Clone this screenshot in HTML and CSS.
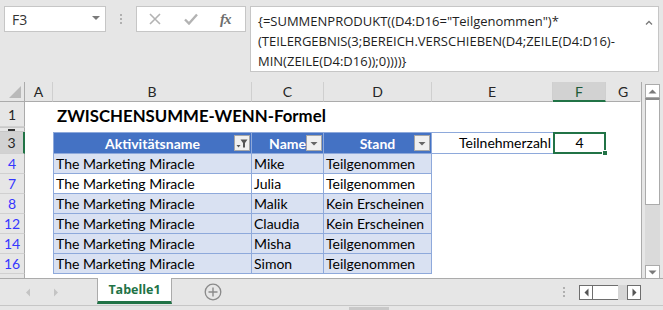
FILE: index.html
```html
<!DOCTYPE html>
<html lang="de">
<head>
    <meta charset="UTF-8">
    <title>ZWISCHENSUMME-WENN-Formel</title>
    <link rel="stylesheet" href="styles.css">
</head>
<body>
    <!-- Formelleiste -->
    <div class="topbar">
        <div class="namebox"><span>F3</span><span class="caret"></span></div>
        <div class="grip"><i></i><i></i><i></i></div>
        <div class="fxbtns">
            <svg class="ico-x" width="12" height="12" viewBox="0 0 12 12"><path d="M1 1L11 11M11 1L1 11" stroke="#b3b3b3" stroke-width="1.6" fill="none"/></svg>
            <svg class="ico-ok" width="14" height="12" viewBox="0 0 14 12"><path d="M1 6.5L5 10.5L13 1.5" stroke="#b3b3b3" stroke-width="2.4" fill="none"/></svg>
            <span class="fx"><i>f</i><i>x</i></span>
        </div>
        <div class="formula">
            <div class="formula-text">
                <div>{=SUMMENPRODUKT((D4:D16="Teilgenommen")*</div>
                <div>(TEILERGEBNIS(3;BEREICH.VERSCHIEBEN(D4;ZEILE(D4:D16)-</div>
                <div>MIN(ZEILE(D4:D16));0))))}</div>
            </div>
            <svg class="collapse" width="8" height="5" viewBox="0 0 8 5"><path d="M1 4.5L4 1.5L7 4.5" stroke="#7a7a7a" stroke-width="1.3" fill="none"/></svg>
        </div>
    </div>

    <!-- Tabelle -->
    <div class="main">
        <div class="sheet">
            <div class="row r-head">
                <div class="rh corner"><svg width="12" height="12" viewBox="0 0 12 12"><path d="M12 0V12H0Z" fill="#b9b9b9"/></svg></div>
                <div class="ch w-a">A</div>
                <div class="ch w-b">B</div>
                <div class="ch w-c">C</div>
                <div class="ch w-d">D</div>
                <div class="ch w-e">E</div>
                <div class="ch w-f ch-sel">F</div>
                <div class="ch w-g">G</div>
            </div>
            <div class="row r-title">
                <div class="rh">1</div>
                <div class="w-a"></div>
                <div class="title">ZWISCHENSUMME-WENN-Formel</div>
            </div>
            <div class="row r-hidden">
                <div class="rh"></div>
            </div>
            <div class="row r-th">
                <div class="rh rh-sel">3</div>
                <div class="w-a"></div>
                <div class="th w-b first">
                    <span>Aktivitätsname</span>
                    <span class="fbtn">
                        <svg width="14" height="14" viewBox="0 0 14 14"><path d="M1.5 9H5.5L3.5 11.5Z" fill="#555"/><path d="M5.5 3.5H12.5L10 7V11.5H8V7Z" fill="#555"/></svg>
                    </span>
                </div>
                <div class="th w-c">
                    <span>Name</span>
                    <span class="fbtn"><svg width="14" height="14" viewBox="0 0 14 14"><path d="M3.5 6H10.5L7 9.5Z" fill="#666"/></svg></span>
                </div>
                <div class="th w-d">
                    <span>Stand</span>
                    <span class="fbtn"><svg width="14" height="14" viewBox="0 0 14 14"><path d="M3.5 6H10.5L7 9.5Z" fill="#666"/></svg></span>
                </div>
                <div class="w-e label">Teilnehmerzahl</div>
                <div class="w-f active">4<span class="handle"></span></div>
            </div>
            <div class="row">
                <div class="rh rh-filt">4</div><div class="w-a"></div>
                <div class="td w-b first band">The Marketing Miracle</div>
                <div class="td w-c band">Mike</div>
                <div class="td w-d band">Teilgenommen</div>
            </div>
            <div class="row">
                <div class="rh rh-filt">7</div><div class="w-a"></div>
                <div class="td w-b first">The Marketing Miracle</div>
                <div class="td w-c">Julia</div>
                <div class="td w-d">Teilgenommen</div>
            </div>
            <div class="row">
                <div class="rh rh-filt">8</div><div class="w-a"></div>
                <div class="td w-b first band">The Marketing Miracle</div>
                <div class="td w-c band">Malik</div>
                <div class="td w-d band">Kein Erscheinen</div>
            </div>
            <div class="row">
                <div class="rh rh-filt">12</div><div class="w-a"></div>
                <div class="td w-b first band">The Marketing Miracle</div>
                <div class="td w-c band">Claudia</div>
                <div class="td w-d band">Kein Erscheinen</div>
            </div>
            <div class="row">
                <div class="rh rh-filt">14</div><div class="w-a"></div>
                <div class="td w-b first band">The Marketing Miracle</div>
                <div class="td w-c band">Misha</div>
                <div class="td w-d band">Teilgenommen</div>
            </div>
            <div class="row">
                <div class="rh rh-filt">16</div><div class="w-a"></div>
                <div class="td w-b first band">The Marketing Miracle</div>
                <div class="td w-c band">Simon</div>
                <div class="td w-d band">Teilgenommen</div>
            </div>
            <div class="row r-rest">
                <div class="rh"></div>
            </div>
        </div>

        <div class="vscroll">
            <div class="sbtn"><svg width="9" height="5" viewBox="0 0 9 5"><path d="M0.5 4.5H8.5L4.5 0.5Z" fill="#7a7a7a"/></svg></div>
            <div class="sthumb"></div>
            <div class="strack"></div>
            <div class="sbtn"><svg width="9" height="5" viewBox="0 0 9 5"><path d="M0.5 0.5H8.5L4.5 4.5Z" fill="#7a7a7a"/></svg></div>
        </div>
    </div>

    <!-- Blattregister -->
    <div class="tabbar">
        <svg class="nav" width="6" height="9" viewBox="0 0 6 9"><path d="M5 0.5V8.5L1 4.5Z" fill="#c4c4c4"/></svg>
        <svg class="nav nav-r" width="6" height="9" viewBox="0 0 6 9"><path d="M1 0.5V8.5L5 4.5Z" fill="#c4c4c4"/></svg>
        <div class="tab">Tabelle1</div>
        <svg class="addsheet" width="18" height="18" viewBox="0 0 18 18"><circle cx="9" cy="9" r="7.8" stroke="#8a8a8a" stroke-width="1.3" fill="none"/><path d="M9 4.5V13.5M4.5 9H13.5" stroke="#8a8a8a" stroke-width="1.4"/></svg>
        <div class="spacer"></div>
        <div class="grip grip-sm"><i></i><i></i><i></i></div>
        <div class="hscroll">
            <div class="hbtn"><svg width="5" height="9" viewBox="0 0 5 9"><path d="M4.5 0.5V8.5L0.5 4.5Z" fill="#555"/></svg></div>
            <div class="hthumb"></div>
            <div class="htrack"></div>
            <div class="hbtn"><svg width="5" height="9" viewBox="0 0 5 9"><path d="M0.5 0.5V8.5L4.5 4.5Z" fill="#555"/></svg></div>
        </div>
    </div>
    <div class="statusbar"><div class="sbar-thumb"></div></div>
</body>
</html>
```

FILE: styles.css
```css
* {
    box-sizing: border-box;
}
body {
    margin: 0;
    width: 663px;
    height: 310px;
    overflow: hidden;
    background-color: #e6e6e6;
    font-family: Lato, "Open Sans", sans-serif;
    color: #000;
}

/* Formelleiste */
.topbar {
    display: flex;
    align-items: flex-start;
    height: 82px;
    padding: 6px 0 0 4px;
}
.namebox {
    width: 102px;
    height: 26px;
    background-color: #fff;
    border: 1px solid #c6c6c6;
    display: flex;
    align-items: center;
    justify-content: space-between;
    padding: 0 5px 0 7px;
    font-family: "Open Sans", sans-serif;
    font-size: 14px;
    color: #333;
}
.caret {
    border-left: 4px solid transparent;
    border-right: 4px solid transparent;
    border-top: 4px solid #7a7a7a;
    margin-top: -3px;
}
.grip {
    display: flex;
    flex-direction: column;
    gap: 2px;
    margin: 8px 14px 0 14px;
}
.grip i {
    display: block;
    width: 2px;
    height: 2px;
    background-color: #b0b0b0;
}
.fxbtns {
    width: 110px;
    height: 26px;
    background-color: #fff;
    border: 1px solid #c6c6c6;
    display: flex;
    align-items: center;
    padding-left: 12px;
}
.ico-ok {
    margin-left: 23px;
}
.fx {
    margin-left: 22px;
    font-family: "Liberation Serif", serif;
    font-size: 15px;
    font-weight: bold;
    color: #6e6e6e;
    letter-spacing: -1px;
}
.formula {
    width: 409px;
    height: 66px;
    margin-left: 4px;
    background-color: #fff;
    border: 1px solid #c6c6c6;
    display: flex;
    justify-content: space-between;
    padding: 4px 5px 0 7px;
    font-family: "Open Sans", sans-serif;
    font-size: 13px;
    line-height: 20px;
    color: #1e1e1e;
}
.collapse {
    margin-top: 9px;
}

/* Tabellenblatt */
.main {
    display: flex;
    height: 196px;
}
.sheet {
    width: 642px;
    background-color: #fff;
    border-right: 1px solid #ababab;
}
.row {
    display: flex;
    height: 20px;
    font-size: 14px;
}
.r-head {
    background-color: #e6e6e6;
}
.r-title {
    height: 25px;
}
.r-hidden {
    height: 5px;
}
.r-th {
    height: 22px;
}
.r-rest {
    height: 4px;
}
.rh {
    width: 25px;
    flex: none;
    background-color: #e6e6e6;
    border-right: 1px solid #ababab;
    border-bottom: 1px solid #d0d0d0;
    display: flex;
    align-items: center;
    justify-content: center;
    font-size: 14px;
    color: #262626;
}
.corner {
    justify-content: flex-end;
    align-items: flex-end;
    padding: 0 3px 3px 0;
    border-bottom: 1px solid #ababab;
}
.r-hidden .rh {
    border-top: 1px solid #c8c8c8;
    border-bottom: 1px solid #c8c8c8;
    justify-content: flex-start;
    padding-left: 8px;
}
.r-hidden .rh::before {
    content: "";
    width: 7px;
    height: 2px;
    background-color: #333;
}
.r-rest .rh {
    border-bottom: none;
}
.rh-sel {
    background-color: #d2d2d2;
    border-right: 2px solid #217346;
}
.rh-filt {
    color: #3636ff;
}
.ch {
    flex: none;
    border-right: 1px solid #cfcfcf;
    border-bottom: 1px solid #ababab;
    text-align: center;
    line-height: 19px;
    font-size: 14px;
    color: #262626;
}
.ch-sel {
    background-color: #d2d2d2;
    border-bottom: 2px solid #217346;
    color: #1d5a37;
}
.w-a { width: 28px; flex: none; }
.w-b { width: 199px; flex: none; }
.w-c { width: 72px; flex: none; }
.w-d { width: 108px; flex: none; }
.w-e { width: 121px; flex: none; }
.w-f { width: 53px; flex: none; }
.w-g { width: 34px; flex: none; border-right: none; }

.title {
    padding: 3px 0 0 4px;
    font-size: 16.8px;
    font-weight: bold;
    line-height: 22px;
}

/* Datentabelle */
.th {
    display: grid;
    align-items: center;
    background-color: #4472c4;
    border-right: 1px solid #8ea9db;
    border-bottom: 1px solid #8ea9db;
    border-top: 1px solid #8ea9db;
    color: #fff;
    font-weight: bold;
    font-size: 14px;
}
.th > span {
    grid-area: 1 / 1;
}
.th > span:first-child {
    justify-self: center;
}
.fbtn {
    justify-self: end;
    width: 16px;
    height: 16px;
    margin-right: 1px;
    background-color: #f0f0f0;
    border: 1px solid #a6a6a6;
    display: flex;
    align-items: center;
    justify-content: center;
}
.first {
    border-left: 1px solid #8ea9db;
}
.td {
    border-right: 1px solid #8ea9db;
    border-bottom: 1px solid #8ea9db;
    padding-left: 2px;
    line-height: 19px;
    white-space: nowrap;
}
.band {
    background-color: #d9e1f2;
}
.label {
    text-align: right;
    padding-right: 2px;
    border-top: 1px solid #8ea9db;
    border-bottom: 1px solid #8ea9db;
    line-height: 20px;
}
.active {
    position: relative;
    border: 2px solid #217346;
    text-align: center;
    line-height: 18px;
}
.handle {
    position: absolute;
    right: -4px;
    bottom: -4px;
    width: 6px;
    height: 6px;
    background-color: #217346;
    border: 1px solid #fff;
}

/* Bildlaufleisten */
.vscroll {
    display: flex;
    flex-direction: column;
    width: 15px;
    height: 195px;
    margin: 2px 0 0 3px;
}
.sbtn {
    height: 14px;
    background-color: #fff;
    border: 1px solid #ababab;
    display: flex;
    align-items: center;
    justify-content: center;
}
.sthumb {
    height: 107px;
    background-color: #fff;
    border: 1px solid #ababab;
    border-top: 2px solid #8a8a8a;
}
.strack {
    flex: 1;
    background-color: #dadada;
}

/* Blattregister */
.tabbar {
    display: flex;
    align-items: center;
    height: 28px;
    border-top: 1px solid #ababab;
    border-bottom: 1px solid #c6c6c6;
    padding: 0 22px 0 25px;
}
.nav-r {
    margin-left: 22px;
}
.tab {
    align-self: flex-start;
    margin: -1px 0 0 38px;
    width: 75px;
    height: 26px;
    background-color: #fff;
    border-left: 1px solid #ababab;
    border-right: 1px solid #ababab;
    border-bottom: 3px solid #217346;
    text-align: center;
    font-family: "Open Sans", sans-serif;
    font-weight: bold;
    font-size: 12.5px;
    line-height: 23px;
    color: #217346;
}
.addsheet {
    margin-left: 32px;
}
.spacer {
    flex: 1;
}
.grip-sm {
    margin: 0 14px 0 0;
}
.hscroll {
    display: flex;
    height: 15px;
}
.hbtn {
    width: 14px;
    background-color: #fff;
    border: 1px solid #6e6e6e;
    display: flex;
    align-items: center;
    justify-content: center;
}
.hthumb {
    width: 25px;
    background-color: #fff;
    border-top: 1px solid #6e6e6e;
    border-bottom: 1px solid #6e6e6e;
}
.htrack {
    width: 9px;
    background-color: #d6d6d6;
}
.statusbar {
    height: 3px;
    padding-left: 349px;
}
.sbar-thumb {
    width: 40px;
    height: 3px;
    margin-top: 1px;
    background-color: #c8c8c8;
}
```
